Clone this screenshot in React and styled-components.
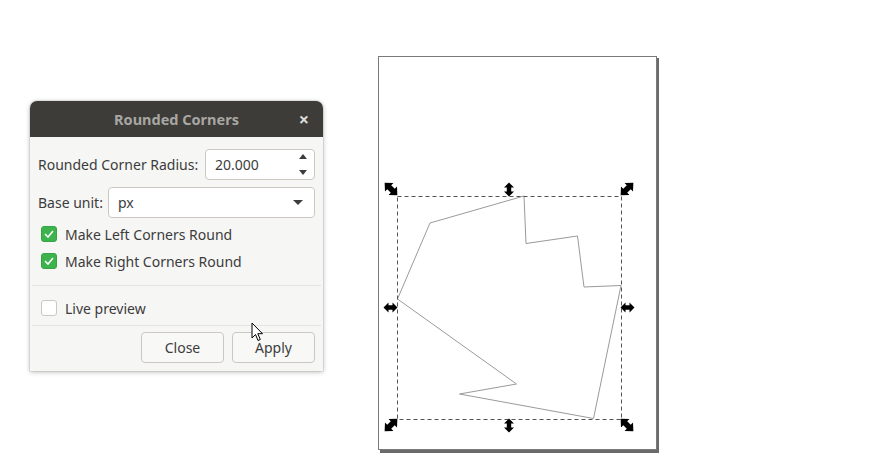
import React from 'react'
import styled, { createGlobalStyle } from 'styled-components'

const GlobalStyle = createGlobalStyle`
  html, body {
    margin: 0;
    padding: 0;
    background: #ffffff;
  }
  body {
    font-family: "Noto Sans", "DejaVu Sans", sans-serif;
  }
`

const Desktop = styled.div`
  position: relative;
  width: 889px;
  height: 475px;
  overflow: hidden;
  background: #ffffff;
`

const CanvasArt = styled.svg`
  position: absolute;
  left: 0;
  top: 0;
`

const DialogWindow = styled.div`
  position: absolute;
  left: 30px;
  top: 101px;
  width: 293px;
  height: 270px;
  display: flex;
  flex-direction: column;
  background: #f6f6f5;
  border-radius: 7px 7px 0 0;
  box-shadow: 0 1px 5px rgba(0, 0, 0, 0.28), 0 0 0 1px rgba(0, 0, 0, 0.06);
  overflow: hidden;
`

const TitleBar = styled.div`
  height: 36px;
  flex: none;
  display: flex;
  align-items: center;
  justify-content: center;
  position: relative;
  background: #3d3c38;
  color: #a8a7a3;
  font-weight: 700;
  font-size: 14.5px;
`

const CloseX = styled.span`
  position: absolute;
  right: 14px;
  top: 6px;
  color: #dcdcda;
  font-size: 18px;
  font-weight: 700;
`

const Body = styled.div`
  flex: 1;
  display: flex;
  flex-direction: column;
  padding: 12px 8px 0 8px;
`

const FieldRow = styled.div`
  display: flex;
  align-items: center;
  gap: 5px;
  margin-bottom: ${p => p.$mb || 0}px;
`

const Label = styled.span`
  font-size: 14px;
  color: #3c3c3c;
  white-space: nowrap;
`

const EntryBox = styled.div`
  box-sizing: border-box;
  height: 31px;
  width: ${p => p.$w}px;
  margin-left: auto;
  display: flex;
  align-items: center;
  justify-content: space-between;
  padding: 0 7px 0 9px;
  background: #ffffff;
  border: 1px solid #cdc7c2;
  border-radius: 4px;
  font-size: 14px;
  color: #3c3c3c;
`

const SpinArrows = styled.div`
  display: flex;
  flex-direction: column;
  gap: 11px;
  align-items: center;
`

const Arrow = styled.span`
  width: 0;
  height: 0;
  border-left: ${p => p.$s}px solid transparent;
  border-right: ${p => p.$s}px solid transparent;
  ${p => (p.$up ? 'border-bottom' : 'border-top')}: ${p => p.$h}px solid #3c3c3c;
  margin-right: ${p => p.$mr || 0}px;
`

const CheckRow = styled.label`
  display: flex;
  align-items: center;
  gap: 8px;
  height: 18px;
  padding-left: 3px;
  font-size: 14px;
  color: #3c3c3c;
  margin-top: ${p => p.$mt || 0}px;
`

const Box = styled.span`
  box-sizing: border-box;
  width: 16px;
  height: 16px;
  border-radius: 3px;
  display: flex;
  align-items: center;
  justify-content: center;
  background: ${p => (p.$checked ? '#3db34d' : '#ffffff')};
  border: 1px solid ${p => (p.$checked ? '#34a444' : '#cdc7c2')};
`

const Separator = styled.div`
  height: 1px;
  background: #e5e4e2;
  margin: ${p => p.$m};
`

const ButtonRow = styled.div`
  display: flex;
  justify-content: flex-end;
  gap: 8px;
  margin-top: 6px;
`

const Button = styled.div`
  box-sizing: border-box;
  width: 83px;
  height: 31px;
  display: flex;
  align-items: center;
  justify-content: center;
  border: 1px solid #cdc7c2;
  border-radius: 4px;
  background: #f8f8f7;
  font-size: 14px;
  color: #3c3c3c;
`

const Cursor = styled.svg`
  position: absolute;
  left: 251px;
  top: 322px;
`

const Check = ({ checked }) => (
  <Box $checked={checked}>
    {checked && (
      <svg width="10" height="8" viewBox="0 0 10 8">
        <path d="M1 4 L4 7 L9 1" fill="none" stroke="#fff" strokeWidth="1.6" />
      </svg>
    )}
  </Box>
)

const dbl = 'M0,-7 L5,-2 L2.2,-2 L2.2,2 L5,2 L0,7 L-5,2 L-2.2,2 L-2.2,-2 L-5,-2 Z'
const diag = 'M0,-9 L6,-2.5 L2.8,-2.5 L2.8,2.5 L6,2.5 L0,9 L-6,2.5 L-2.8,2.5 L-2.8,-2.5 L-6,-2.5 Z'

const handles = [
  { x: 391, y: 189, r: -45, d: diag },
  { x: 627, y: 189, r: 45, d: diag },
  { x: 391, y: 425, r: 45, d: diag },
  { x: 627, y: 425, r: -45, d: diag },
  { x: 509, y: 189.5, r: 0, d: dbl },
  { x: 509, y: 425.5, r: 0, d: dbl },
  { x: 390.5, y: 307.5, r: 90, d: dbl },
  { x: 627.5, y: 307.5, r: 90, d: dbl },
]

const shape = '524,196 430,223 397.5,299 516.5,384 459.5,394 593.5,418.5 621,285.5 584,287 577.5,236 526,243.5'

const Canvas = () => (
  <CanvasArt width="889" height="475" viewBox="0 0 889 475">
    <rect x="380" y="58" width="279" height="395" fill="#6a6a6a" />
    <rect x="378.5" y="56.5" width="278" height="393" fill="#ffffff" stroke="#7a7a7a" />
    <polygon points={shape} fill="none" stroke="#9a9a9a" strokeWidth="1" />
    <rect x="397.5" y="196.5" width="224" height="223" fill="none" stroke="#555" strokeDasharray="4 3" />
    {handles.map((h, i) => (
      <path key={i} d={h.d} fill="#000" transform={`translate(${h.x} ${h.y}) rotate(${h.r})`} />
    ))}
  </CanvasArt>
)

export default function App() {
  return (
    <Desktop>
      <GlobalStyle />
      <Canvas />
      <DialogWindow>
        <TitleBar>
          Rounded Corners
          <CloseX>×</CloseX>
        </TitleBar>
        <Body>
          <FieldRow $mb={7}>
            <Label>Rounded Corner Radius:</Label>
            <EntryBox $w={110}>
              <span>20.000</span>
              <SpinArrows>
                <Arrow $up $s={4} $h={5} />
                <Arrow $s={4} $h={5} />
              </SpinArrows>
            </EntryBox>
          </FieldRow>
          <FieldRow>
            <Label>Base unit:</Label>
            <EntryBox $w={207}>
              <span>px</span>
              <Arrow $s={5} $h={5} $mr={4} />
            </EntryBox>
          </FieldRow>
          <CheckRow $mt={7}>
            <Check checked />
            Make Left Corners Round
          </CheckRow>
          <CheckRow $mt={9}>
            <Check checked />
            Make Right Corners Round
          </CheckRow>
          <Separator $m="15px -6px 13px -6px" />
          <CheckRow>
            <Check />
            Live preview
          </CheckRow>
          <Separator $m="8px -6px 0 -6px" />
          <ButtonRow>
            <Button>Close</Button>
            <Button>Apply</Button>
          </ButtonRow>
        </Body>
      </DialogWindow>
      <Cursor width="14" height="21" viewBox="0 0 14 21">
        <path d="M1 1 L1 16 L4.5 12.5 L7 18.5 L9.3 17.5 L6.8 11.7 L11.5 11.7 Z" fill="#fff" stroke="#000" strokeWidth="1" strokeLinejoin="round" />
      </Cursor>
    </Desktop>
  )
}
